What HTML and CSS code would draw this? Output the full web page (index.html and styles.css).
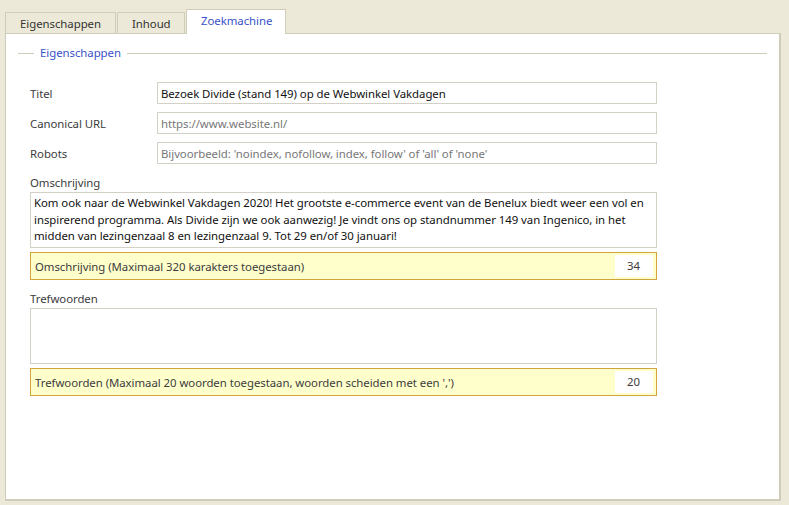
FILE: index.html
```html
<!DOCTYPE html>
<html lang="nl">
<head>
  <meta charset="UTF-8">
  <title>Zoekmachine</title>
  <link rel="stylesheet" href="styles.css">
</head>
<body>
  <!-- Tabs -->
  <div class="tabs">
    <div class="tab">Eigenschappen</div>
    <div class="tab">Inhoud</div>
    <div class="tab active">Zoekmachine</div>
  </div>

  <div class="panel">
    <div class="group-title"><span>Eigenschappen</span></div>

    <div class="form">
      <div class="row">
        <label for="titel">Titel</label>
        <input type="text" id="titel" value="Bezoek Divide (stand 149) op de Webwinkel Vakdagen">
      </div>
      <div class="row">
        <label for="url">Canonical URL</label>
        <input type="text" id="url" placeholder="https://www.website.nl/">
      </div>
      <div class="row">
        <label for="robots">Robots</label>
        <input type="text" id="robots" placeholder="Bijvoorbeeld: 'noindex, nofollow, index, follow' of 'all' of 'none'">
      </div>

      <div class="block">
        <label for="omschrijving">Omschrijving</label>
        <textarea id="omschrijving">Kom ook naar de Webwinkel Vakdagen 2020! Het grootste e-commerce event van de Benelux biedt weer een vol en inspirerend programma. Als Divide zijn we ook aanwezig! Je vindt ons op standnummer 149 van Ingenico, in het midden van lezingenzaal 8 en lezingenzaal 9. Tot 29 en/of 30 januari!</textarea>
        <div class="counter">
          <span>Omschrijving (Maximaal 320 karakters toegestaan)</span>
          <span class="count">34</span>
        </div>
      </div>

      <div class="block">
        <label for="trefwoorden">Trefwoorden</label>
        <textarea id="trefwoorden"></textarea>
        <div class="counter">
          <span>Trefwoorden (Maximaal 20 woorden toegestaan, woorden scheiden met een ',')</span>
          <span class="count">20</span>
        </div>
      </div>
    </div>
  </div>
</body>
</html>
```

FILE: styles.css
```css
:root {
  --bg: #ECE9D8;
  --border: #CFCCBA;
  --field-border: #D3D1C6;
  --blue: #3a52c8;
  --text: #3c3c3c;
  --warn-bg: #FFFFCC;
  --warn-border: #D4A43C;
}
* { box-sizing: border-box; margin: 0; padding: 0; }
body {
  font-family: "Noto Sans", sans-serif;
  font-size: 11.4px;
  letter-spacing: -0.05px;
  color: var(--text);
  background: var(--bg);
  height: 505px;
  display: flex;
  flex-direction: column;
}

/* Tabs */
.tabs {
  display: flex;
  align-items: flex-end;
  padding: 9px 0 0 5px;
  height: 34px;
  margin-bottom: -1px;
}
.tab {
  height: 22px;
  line-height: 22px;
  padding: 0 14px;
  border: 1px solid var(--border);
  border-bottom: none;
  margin-right: 1px;
  color: #333;
}
.tab:nth-child(1) { width: 111px; text-align: center; }
.tab:nth-child(2) { width: 68px; text-align: center; }
.tab.active {
  width: 100px;
  text-align: center;
  height: 25px;
  line-height: 22px;
  background: #fff;
  color: var(--blue);
  position: relative;
  z-index: 1;
}

.panel {
  flex: 1;
  margin: 0 8px 4px 5px;
  background: #fff;
  border: 1px solid var(--border);
  border-right-width: 2px;
  border-bottom-width: 2px;
  padding: 11px 12px 0 12px;
}

.group-title {
  display: flex;
  align-items: center;
  height: 16px;
  line-height: 16px;
  color: var(--blue);
}
.group-title::before {
  content: "";
  width: 16px;
  border-top: 1px solid var(--border);
  margin-right: 6px;
}
.group-title::after {
  content: "";
  flex: 1;
  border-top: 1px solid var(--border);
  margin-left: 6px;
}

.form {
  width: 627px;
  margin: 21px 0 0 12px;
}
.row {
  display: flex;
  align-items: center;
  height: 22px;
  margin-bottom: 8px;
}
.row label { width: 127px; }
.row input {
  flex: 1;
  height: 22px;
  border: 1px solid var(--field-border);
  padding: 0 3px;
  font: inherit;
  letter-spacing: inherit;
  color: #111;
  outline: none;
}
.row input::placeholder { color: #777; }

.block { margin-top: 11px; }
.block + .block { margin-top: 11px; }
.block label {
  display: block;
  height: 16px;
  line-height: 16px;
  margin-bottom: 1px;
}
.block textarea {
  display: block;
  width: 100%;
  height: 56px;
  border: 1px solid var(--field-border);
  padding: 2px 3px;
  font: inherit;
  letter-spacing: inherit;
  line-height: 16.5px;
  color: #111;
  resize: none;
  outline: none;
  overflow: hidden;
}

.counter {
  display: flex;
  align-items: center;
  justify-content: space-between;
  height: 28px;
  margin-top: 4px;
  background: var(--warn-bg);
  border: 1px solid var(--warn-border);
  padding: 0 3px 0 4px;
}
.counter .count {
  width: 38px;
  height: 22px;
  line-height: 22px;
  background: #fff;
  text-align: right;
  padding-right: 13px;
}
```
